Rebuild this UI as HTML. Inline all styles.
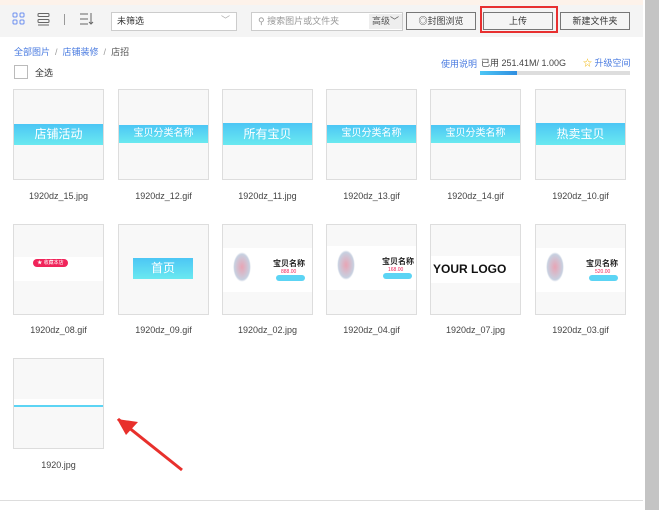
<!DOCTYPE html><html><head><meta charset="utf-8"><style>
*{margin:0;padding:0;box-sizing:border-box}
body{width:659px;height:510px;overflow:hidden;background:#fff;font-family:"Liberation Sans","Noto Sans CJK SC",sans-serif;font-size:9px;color:#333;position:relative}
.a{position:absolute}
.th{position:absolute;width:91px;height:91px;border:1px solid #ddd;background:#f8f8f8;overflow:hidden}
.lb{position:absolute;width:91px;text-align:center;font-size:9px;color:#444}
.band{position:absolute;left:0;right:0;background:linear-gradient(#4cc6f5,#6ae9f0);color:#fff;text-align:center}
.btn{position:absolute;top:12px;height:18px;border:1px solid #777;background:#f5f5f5;font-size:9px;text-align:center;line-height:16px;color:#333}
.pr{position:absolute;left:0;right:0;background:#fff}
</style></head><body>
<div class="a" style="left:0;top:0;width:643px;height:5px;background:#fdf2ea"></div>
<div class="a" style="left:0;top:5px;width:643px;height:32px;background:#f4f4f4"></div>
<div class="a" style="left:645px;top:0;width:14px;height:510px;background:#c4c4c4"></div>
<svg class="a" style="left:12px;top:12px" width="14" height="14"><g fill="none" stroke="#6d8ff0" stroke-width="1"><rect x="1" y="1" width="4" height="4" rx="1"/><rect x="8" y="1" width="4" height="4" rx="1"/><rect x="1" y="8" width="4" height="4" rx="1"/><rect x="8" y="8" width="4" height="4" rx="1"/></g></svg>
<svg class="a" style="left:37px;top:12px" width="14" height="14"><g fill="none" stroke="#666"><rect x="1" y="1.5" width="11" height="3" rx="1"/><rect x="1" y="7.5" width="11" height="3" rx="1"/><path d="M1 13h11"/></g></svg>
<div class="a" style="left:64px;top:14px;width:1px;height:11px;background:#999"></div>
<svg class="a" style="left:79px;top:12px" width="16" height="14"><g fill="none" stroke="#666"><path d="M1 2h8M1 7h8M1 12h8M12 1v11M10 10l2 2 2-2"/></g></svg>
<div class="a" style="left:111px;top:12px;width:126px;height:19px;border:1px solid #ccc;background:#fff;padding-left:5px;line-height:17px;color:#333">未筛选<span style="position:absolute;right:6px;top:-1px;color:#aaa">﹀</span></div>
<div class="a" style="left:251px;top:12px;width:152px;height:19px;border:1px solid #ccc;background:#fff;line-height:17px;color:#999;padding-left:6px">⚲ 搜索图片或文件夹<span style="position:absolute;right:0;top:1px;height:15px;line-height:15px;background:#eee;padding:0 3px;color:#555">高级﹀</span></div>
<div class="btn" style="left:406px;width:70px;color:#444">◎封图浏览</div>
<div class="a" style="left:480px;top:6px;width:78px;height:27px;border:2px solid #e83030"></div>
<div class="btn" style="left:483px;width:70px">上传</div>
<div class="btn" style="left:560px;width:70px">新建文件夹</div>
<div class="a" style="left:14px;top:45px;color:#4a7be0">全部图片 <span style="color:#999">&nbsp;/&nbsp;</span> 店铺装修 <span style="color:#999">&nbsp;/&nbsp;</span> <span style="color:#555">店招</span></div>
<div class="a" style="left:14px;top:65px;width:14px;height:14px;border:1px solid #bbb;background:#fff"></div>
<div class="a" style="left:35px;top:66px">全选</div>
<div class="a" style="left:441px;top:57px;color:#4a7be0">使用说明</div>
<div class="a" style="left:481px;top:56px;color:#444">已用 251.41M/ 1.00G</div>
<div class="a" style="left:583px;top:56px;color:#4a7be0"><span style="color:#f0b400">☆</span> 升级空间</div>
<div class="a" style="left:480px;top:71px;width:150px;height:4px;background:#ddd"><div style="width:37px;height:4px;background:linear-gradient(90deg,#4cc6f5,#2f8ee0)"></div></div>

<div class="th" style="left:13px;top:89px"><div class="band" style="top:34px;height:21px;font-size:12px;line-height:21px">店铺活动</div></div>
<div class="th" style="left:118px;top:89px"><div class="band" style="top:35px;height:18px;font-size:10px;line-height:18px">宝贝分类名称</div></div>
<div class="th" style="left:222px;top:89px"><div class="band" style="top:33px;height:22px;font-size:12px;line-height:22px">所有宝贝</div></div>
<div class="th" style="left:326px;top:89px"><div class="band" style="top:35px;height:18px;font-size:10px;line-height:18px">宝贝分类名称</div></div>
<div class="th" style="left:430px;top:89px"><div class="band" style="top:35px;height:18px;font-size:10px;line-height:18px">宝贝分类名称</div></div>
<div class="th" style="left:535px;top:89px"><div class="band" style="top:33px;height:22px;font-size:12px;line-height:22px">热卖宝贝</div></div>
<div class="lb" style="left:13px;top:191px">1920dz_15.jpg</div>
<div class="lb" style="left:118px;top:191px">1920dz_12.gif</div>
<div class="lb" style="left:222px;top:191px">1920dz_11.jpg</div>
<div class="lb" style="left:326px;top:191px">1920dz_13.gif</div>
<div class="lb" style="left:430px;top:191px">1920dz_14.gif</div>
<div class="lb" style="left:535px;top:191px">1920dz_10.gif</div>

<div class="th" style="left:13px;top:224px"><div class="pr" style="top:32px;height:24px"><div class="a" style="left:19px;top:2px;width:35px;height:8px;border-radius:4px;background:#f0245a;color:#fff;font-size:5px;line-height:8px;text-align:center">★ 收藏本店</div></div></div>
<div class="th" style="left:118px;top:224px"><div class="band" style="left:14px;right:15px;top:33px;height:21px;font-size:12px;line-height:21px">首页</div></div>
<div class="th" style="left:222px;top:224px"><div class="pr" style="top:23px;height:44px"><div class="a" style="left:10px;top:4px;width:18px;height:30px;border-radius:50%;background:radial-gradient(#e8a4b4,#c7d0e0 60%,transparent 70%)"></div><div class="a" style="left:50px;top:10px;font-size:8px;font-weight:bold;color:#222">宝贝名称</div><div class="a" style="left:58px;top:21px;font-size:5px;color:#f0245a">888.00</div><div class="a" style="left:53px;top:27px;width:29px;height:6px;border-radius:3px;background:#5cd4f4"></div></div></div>
<div class="th" style="left:326px;top:224px"><div class="pr" style="top:21px;height:44px"><div class="a" style="left:10px;top:4px;width:18px;height:30px;border-radius:50%;background:radial-gradient(#e8a4b4,#c7d0e0 60%,transparent 70%)"></div><div class="a" style="left:55px;top:10px;font-size:8px;font-weight:bold;color:#222">宝贝名称</div><div class="a" style="left:61px;top:21px;font-size:5px;color:#f0245a">168.00</div><div class="a" style="left:56px;top:27px;width:29px;height:6px;border-radius:3px;background:#5cd4f4"></div></div></div>
<div class="th" style="left:430px;top:224px"><div class="pr" style="top:31px;height:27px"><div class="a" style="left:2px;top:6px;font-size:12px;font-weight:bold;color:#111;white-space:nowrap">YOUR LOGO</div></div></div>
<div class="th" style="left:535px;top:224px"><div class="pr" style="top:23px;height:44px"><div class="a" style="left:10px;top:4px;width:18px;height:30px;border-radius:50%;background:radial-gradient(#e8a4b4,#c7d0e0 60%,transparent 70%)"></div><div class="a" style="left:50px;top:10px;font-size:8px;font-weight:bold;color:#222">宝贝名称</div><div class="a" style="left:59px;top:21px;font-size:5px;color:#f0245a">520.00</div><div class="a" style="left:53px;top:27px;width:29px;height:6px;border-radius:3px;background:#5cd4f4"></div></div></div>
<div class="lb" style="left:13px;top:325px">1920dz_08.gif</div>
<div class="lb" style="left:118px;top:325px">1920dz_09.gif</div>
<div class="lb" style="left:222px;top:325px">1920dz_02.jpg</div>
<div class="lb" style="left:326px;top:325px">1920dz_04.gif</div>
<div class="lb" style="left:430px;top:325px">1920dz_07.jpg</div>
<div class="lb" style="left:535px;top:325px">1920dz_03.gif</div>

<div class="th" style="left:13px;top:358px"><div class="pr" style="top:40px;height:6px"></div><div class="a" style="left:0;right:0;top:46px;height:2px;background:#5cd4f4"></div></div>
<div class="lb" style="left:13px;top:460px">1920.jpg</div>
<svg class="a" style="left:110px;top:410px" width="80" height="65"><path d="M8 9L72 60" stroke="#e8302c" stroke-width="3"/><path d="M7 9L28 12L16 25Z" fill="#e8302c"/></svg>
<div class="a" style="left:0;top:500px;width:643px;height:1px;background:#ddd"></div>
</body></html>
